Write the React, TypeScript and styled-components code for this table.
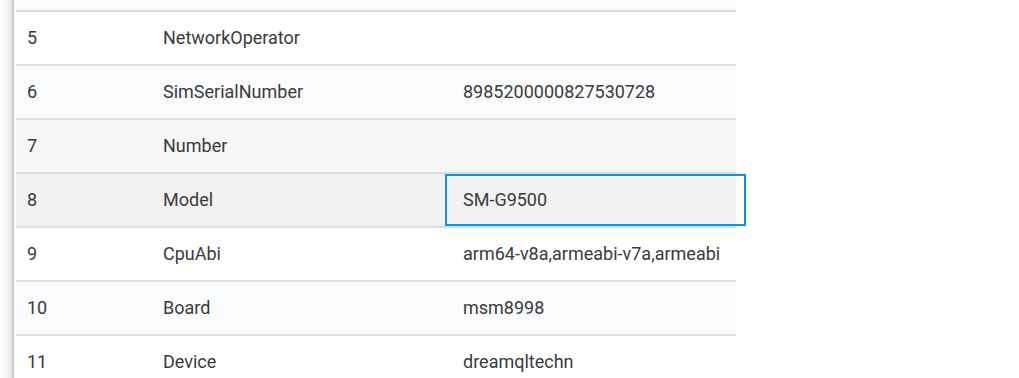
import React from "react";
import styled, { createGlobalStyle } from "styled-components";

const GlobalStyle = createGlobalStyle`
  html, body {
    margin: 0;
    padding: 0;
    background: #ffffff;
  }
  body {
    font-family: Roboto, "Noto Sans", sans-serif;
    color: #3a3a3a;
  }
`;

interface I_row {
  no: number;
  name: string;
  value: string;
  // row scrolled above the viewport, only its lower stripe shows
  hidden?: boolean;
}

const rows: I_row[] = [
  { no: 4, name: "", value: "", hidden: true },
  { no: 5, name: "NetworkOperator", value: "" },
  { no: 6, name: "SimSerialNumber", value: "8985200000827530728" },
  { no: 7, name: "Number", value: "" },
  { no: 8, name: "Model", value: "SM-G9500" },
  { no: 9, name: "CpuAbi", value: "arm64-v8a,armeabi-v7a,armeabi" },
  { no: 10, name: "Board", value: "msm8998" },
  { no: 11, name: "Device", value: "dreamqltechn" },
];

const HOVER_ROW = 7;
const SELECTED_ROW = 8;

const Page = styled.div`
  display: flex;
  height: 378px;
  overflow: hidden;
`;

const Gutter = styled.div`
  width: 12px;
  flex: none;
  background: linear-gradient(to right, #ffffff 0%, #f3f3f3 60%, #e6e6e6 100%);
`;

const Rule = styled.div`
  width: 2px;
  flex: none;
  background: #c6c9cd;
`;

const Viewport = styled.div`
  flex: none;
  width: 722px;
  padding-left: 2px;
`;

const Table = styled.table`
  width: 720px;
  margin-top: -43px;
  border-collapse: collapse;
  table-layout: fixed;
  font-size: 18px;
`;

const Row = styled.tr<{ $bg: string }>`
  height: 54px;
  background: ${(p) => p.$bg};
  border-bottom: 2px solid #dadce0;
`;

const Cell = styled.td<{ $pad: number }>`
  position: relative;
  padding: 0 0 0 ${(p) => p.$pad}px;
  vertical-align: middle;
  white-space: nowrap;
  line-height: 22px;
`;

const EditBox = styled.div`
  position: absolute;
  left: 0;
  top: 0;
  right: -10px;
  bottom: 0;
  border: 2px solid #0b91e6;
  pointer-events: none;
`;

const rowBg = (no: number) => {
  if (no === SELECTED_ROW) return "#f2f2f2";
  if (no === HOVER_ROW) return "#f6f6f6";
  return no % 2 === 0 ? "#fafbfd" : "#ffffff";
};

const App = () => {
  return (
    <>
      <GlobalStyle />
      <Page>
        <Gutter />
        <Rule />
        <Viewport>
          <Table>
            <colgroup>
              <col style={{ width: 136 }} />
              <col style={{ width: 293 }} />
              <col style={{ width: 291 }} />
            </colgroup>
            <tbody>
              {rows.map((row) => (
                <Row key={`row_${row.no}`} $bg={rowBg(row.no)}>
                  <Cell $pad={11}>{row.hidden ? "" : row.no}</Cell>
                  <Cell $pad={11}>{row.name}</Cell>
                  <Cell $pad={18}>
                    {row.value}
                    {row.no === SELECTED_ROW && <EditBox />}
                  </Cell>
                </Row>
              ))}
            </tbody>
          </Table>
        </Viewport>
      </Page>
    </>
  );
};

export default App;
